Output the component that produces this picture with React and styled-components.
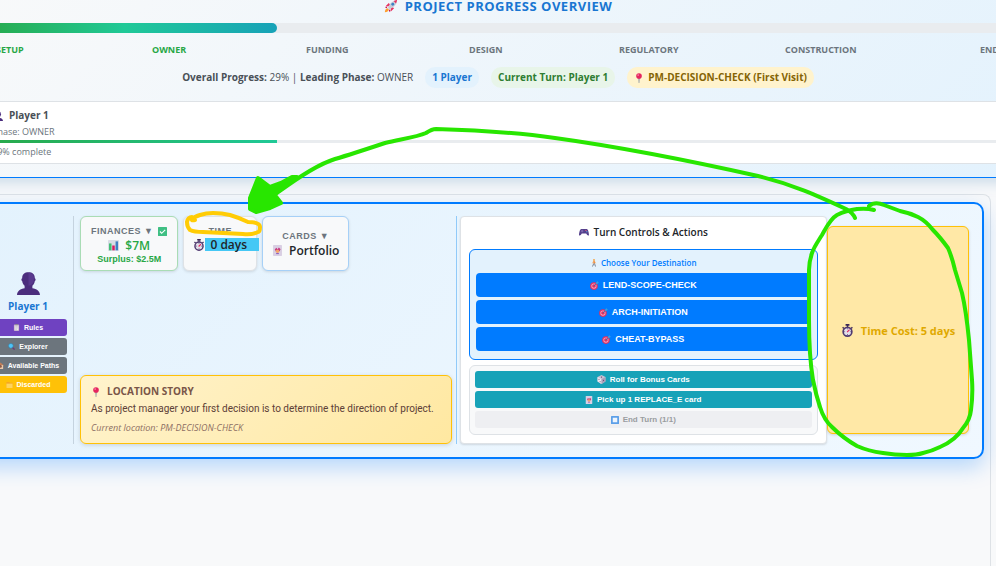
import React from "react";
import styled, { createGlobalStyle } from "styled-components";

const ui = '"Open Sans", "Noto Sans", sans-serif';
const control = '"Liberation Sans", Arial, sans-serif';
const prose = 'Roboto, "Open Sans", sans-serif';

const GlobalStyle = createGlobalStyle`
  *, *::before, *::after { box-sizing: border-box; }
  body { margin: 0; background: #f8f9fa; font-family: ${ui}; color: #212529; }
  h1, h2, h3, p { margin: 0; font-size: inherit; }
  button { margin: 0; cursor: pointer; }
`;

const Page = styled.div`
  position: relative;
  display: flex;
  flex-direction: column;
  min-height: 100vh;
  overflow: hidden;
  background: #f8f9fa;
`;

const Glyph = styled.svg`
  width: ${(p) => p.$size}px;
  height: ${(p) => p.$size}px;
  flex: none;
  display: block;
`;

const art = {
  rocket: (
    <>
      <path d="M3.500 8.500 1 10l2.500.5zM7.500 12.500 6 15l-.5-3z" fill="#c2185b" />
      <path d="M1.500 8.500 5.500 4.500 8 8zM7.500 14.500 11.500 10.500 8 8z" fill="#e8305f" />
      <path d="M4.500 10.500C5.500 6 9.500 2 15 1c-.5 5.500-4.500 9.500-9 10.500z" fill="#c9ccd6" />
      <path d="M11 2.200 15 1l-1.200 4z" fill="#e8305f" />
      <circle cx="10" cy="6" r="1.600" fill="#3b82c4" />
      <path d="M1 15c0-2.500 1-4 3-4.500L5.500 12C5 14 3.500 15 1 15z" fill="#ff9d2e" />
    </>
  ),
  pin: (
    <>
      <path d="M7.300 8h1.500L8 16z" fill="#8a93a0" stroke="#8a93a0" strokeWidth=".6" />
      <circle cx="8" cy="4.700" r="4.500" fill="#e5255f" />
      <circle cx="6.600" cy="3.300" r="1.300" fill="#ff8fac" />
    </>
  ),
  person: (
    <>
      <path d="M0 16c.2-3 2.400-4.200 5.300-4.700V9.500C4.300 8.700 3.700 7.500 3.600 6.300 2.800 6 2.900 4.500 3.600 4.300 3.600 1.500 5.400.2 8 .2s4.400 1.300 4.400 4.100c.7.2.8 1.700 0 2-.1 1.200-.7 2.400-1.700 3.200v1.800c2.900.5 5.100 1.700 5.300 4.700z" fill="#4b2d7d" />
      <path d="M8 .5c2.500 0 3.800 1.500 3.800 4 0 3-1.700 5-3.800 5z" fill="#62419a" opacity=".6" />
    </>
  ),
  chart: (
    <>
      <rect x="0" y="0" width="16" height="16" rx="1" fill="#d8dde5" />
      <rect x="1.500" y="5" width="3.600" height="10" fill="#3fbf73" />
      <rect x="6.200" y="8" width="3.600" height="7" fill="#d81b60" />
      <rect x="11" y="2" width="3.600" height="13" fill="#3d7fc4" />
    </>
  ),
  check: (
    <>
      <rect width="16" height="16" rx="1" fill="#3fbf83" />
      <path d="m3.500 8 3 3.200L12.800 5" fill="none" stroke="#fff" strokeWidth="2" />
    </>
  ),
  watch: (
    <>
      <rect x="5.500" y="0" width="5" height="2" rx=".5" fill="#3a2757" />
      <path d="M8 1v3M2 4l1.500 1.500M14 4l-1.500 1.500" stroke="#3a2757" strokeWidth="1.600" />
      <circle cx="8" cy="9.500" r="5.400" fill="#e4e0ea" stroke="#503a70" strokeWidth="2" />
      <path d="M8 5.500v1M8 12.500v1M4 9.500h1M11 9.500h1" stroke="#503a70" />
      <path d="m7.500 10 3-3" stroke="#e5255f" strokeWidth="1.500" />
    </>
  ),
  card: (
    <>
      <rect x="1.500" y="0" width="13" height="16" rx="1" fill="#d9cfe3" />
      <path d="M4 6 6.500 4 8 6l2-2.500L12.500 6 11 9H5.500z" fill="#c63a82" />
      <circle cx="8" cy="9" r="2.500" fill="#f3a36b" />
      <path d="M6 12.500h4" stroke="#8a5bbd" strokeWidth="1.500" />
    </>
  ),
  pad: (
    <>
      <path d="M3.500 3h9C14.500 3 16 9 16 13c-1.500 1.500-3 0-4.500-2.500h-7C3 13 1.500 14.500 0 13 0 9 1.500 3 3.500 3z" fill="#54408c" />
      <path d="M3 6.500h4M5 4.500v4" stroke="#9a87c9" />
      <circle cx="11" cy="5.500" r="1" fill="#e5557f" />
      <circle cx="12.500" cy="7.500" r="1" fill="#5ba6e0" />
    </>
  ),
  walker: (
    <>
      <circle cx="8" cy="2" r="2" fill="#f3a64a" />
      <path d="M6.500 4h3l1 5h-4z" fill="#f08a3c" />
      <path d="m7.500 9-2.500 6M9 9l2 6" stroke="#6d7788" strokeWidth="1.800" />
      <path d="m6.500 5-2 4M9.500 5l2 3.500" stroke="#f2b067" strokeWidth="1.300" />
    </>
  ),
  target: (
    <>
      <circle cx="7" cy="9" r="6.800" fill="#e02f62" />
      <circle cx="7" cy="9" r="4.600" fill="#f3a9c2" />
      <circle cx="7" cy="9" r="3.200" fill="#e02f62" />
      <path d="m7 9 6-6" stroke="#2675b9" strokeWidth="1.500" />
      <path d="M10.500 5.500 11 2.500 13.500 0l.5 2 2 .5-2.500 2.500z" fill="#38a3df" />
    </>
  ),
  die: (
    <>
      <path d="m8 0 7 3.500v8L8 16l-7-4.500v-8z" fill="#c9c3d3" />
      <path d="m1 3.500 7 4V16l-7-4.500z" fill="#eee9f2" />
      <path d="m15 3.500-7 4V16l7-4.500z" fill="#a99fba" />
      <g fill="#6b3c65">
        <circle cx="8" cy="3.700" r="1.200" />
        <circle cx="3.500" cy="7.500" r="1" />
        <circle cx="5.500" cy="12" r="1" />
        <circle cx="11.500" cy="9.500" r="1" />
      </g>
    </>
  ),
  square: (
    <>
      <rect width="16" height="16" rx="1" fill="#5c9fe8" />
      <rect x="3.500" y="3.500" width="9" height="9" fill="#eef5fd" />
    </>
  ),
  clip: (
    <>
      <rect x="2" y="1" width="12" height="15" rx="1" fill="#b79bc4" />
      <rect x="3.500" y="3" width="9" height="11.500" fill="#eee9ee" />
      <rect x="5" y="0" width="6" height="3" fill="#8c8895" />
      <path d="M5 6h6M5 9h6M5 12h4" stroke="#a4a0aa" />
    </>
  ),
  lens: (
    <>
      <path d="m9 9 6 6" stroke="#6f3a75" strokeWidth="3" />
      <circle cx="6.500" cy="6.500" r="5.500" fill="#4fc3f7" stroke="#357fa5" strokeWidth="1.300" />
    </>
  ),
  house: (
    <>
      <path d="M0 8 8 1l8 7z" fill="#c27d55" />
      <rect x="2" y="7" width="12" height="9" fill="#e8c9aa" />
      <circle cx="8" cy="10" r="3" fill="#8b5a4a" />
    </>
  ),
  folder: (
    <>
      <path d="M1 2h6l2 2h6v12H1z" fill="#f5a623" />
      <path d="M1 6h14v10H1z" fill="#ffd45c" />
    </>
  ),
};

const Icon = ({ name, size = 10 }) => (
  <Glyph $size={size} viewBox="0 0 16 16" aria-hidden="true">
    {art[name]}
  </Glyph>
);

/* ---------- overview header ---------- */

const Overview = styled.header`
  margin: 0 -28px;
  background: linear-gradient(135deg, #f8f9fa 0%, #e3f2fd 100%);
  border-bottom: 1px solid #007bff;
  box-shadow: 0 4px 14px rgba(0, 90, 160, 0.2);
`;

const Title = styled.h1`
  display: flex;
  justify-content: center;
  align-items: center;
  gap: 7px;
  height: 23px;
  padding-bottom: 11px;
  font-size: 13px;
  line-height: 12px;
  letter-spacing: 0.5px;
  color: #1976d2;
`;

const Track = styled.div`
  height: ${(p) => p.$height}px;
  background: #e9ecef;
  border-radius: ${(p) => p.$radius}px;
  overflow: hidden;
`;

const Fill = styled.div`
  height: 100%;
  border-radius: inherit;
  background: ${(p) => p.$paint};
`;

const Stages = styled.div`
  display: grid;
  grid-template-columns: 156fr 154fr 163fr 150fr 166fr 195fr 44fr;
  padding-left: 24px;
  margin-top: 10px;
  font-size: 9px;
  line-height: 13px;
  font-weight: 700;
`;

const Stage = styled.span`
  color: ${(p) => (p.$done ? "#28a745" : "#6c757d")};
`;

const Status = styled.div`
  display: flex;
  justify-content: center;
  align-items: center;
  gap: 12px;
  margin: 11px 0 13px;
  font-size: 10px;
  line-height: 15px;
  color: #495057;
`;

const tones = {
  blue: ["#e3f2fd", "#1976d2"],
  green: ["#e8f5e9", "#2e7d32"],
  amber: ["#fff3cd", "#856404"],
};

const Pill = styled.span`
  display: flex;
  align-items: center;
  gap: 4px;
  padding: 3px 7px;
  border-radius: 10px;
  font-weight: 700;
  background: ${(p) => tones[p.$tone][0]};
  color: ${(p) => tones[p.$tone][1]};
`;

const PlayerStrip = styled.section`
  padding: 7px 0 5px 20px;
  margin-bottom: 13px;
  background: #fff;
  border-top: 1px solid #dee2e6;
  border-bottom: 1px solid #dee2e6;
  font-size: 9px;
  line-height: 13px;
  color: #6c757d;
`;

const StripName = styled.h2`
  display: flex;
  align-items: center;
  gap: 6px;
  margin-bottom: 3px;
  padding-left: 1px;
  font-size: 10px;
  line-height: 13px;
  color: #495057;
`;

const StripTrack = styled(Track)`
  margin: 2px 0 2px -20px;
`;

const StripText = styled.p``;

/* ---------- board ---------- */

const Board = styled.main`
  flex: 1;
  margin: 16px 5px 0 -33px;
  padding: 7px 6px 0;
  border: 1px solid #dee2e6;
  border-bottom: 0;
  border-radius: 8px 8px 0 0;
`;

const Panel = styled.section`
  display: grid;
  grid-template-columns: 84px minmax(0, 386fr) minmax(0, 367fr) 142px;
  padding: 12px 13px 13px;
  border: 2px solid #007bff;
  border-radius: 10px;
  background: linear-gradient(135deg, #e3f2fd 0%, #f0f8ff 100%);
  box-shadow: 0 8px 22px rgba(0, 123, 255, 0.28);
`;

const PlayerColumn = styled.aside`
  display: flex;
  flex-direction: column;
  justify-content: center;
  gap: 2px;
  padding: 50px 6px 46px 0;
`;

const Avatar = styled.div`
  display: flex;
  justify-content: center;
  margin-bottom: 2px;
`;

const PlayerName = styled.h2`
  text-align: center;
  margin-bottom: 3px;
  font-size: 10px;
  line-height: 15px;
  color: #1976d2;
`;

const Button = styled.button`
  display: flex;
  align-items: center;
  justify-content: center;
  gap: 4px;
  width: 100%;
  padding: 0;
  border: 0;
  border-radius: 3px;
  color: #fff;
  font-family: ${control};
  font-weight: 700;
  white-space: nowrap;
`;

const SideButton = styled(Button)`
  height: 17px;
  font-size: 7px;
  background: ${(p) => p.$bg};
`;

const Center = styled.div`
  display: flex;
  flex-direction: column;
  justify-content: space-between;
  margin-right: 3px;
  padding: 0 4px 0 6px;
  border-left: 1px solid #c5d3df;
  border-right: 1px solid #90caf9;
`;

const Cards = styled.div`
  display: flex;
  gap: 5px;
`;

const cardBox = `
  display: flex;
  flex-direction: column;
  align-items: center;
  height: 55px;
  border-radius: 6px;
  background: #f8f9fa;
  box-shadow: 0 1px 3px rgba(0, 0, 0, 0.12);
  font-family: ${ui};
  color: #212529;
  white-space: nowrap;
`;

const CardButton = styled.button`
  ${cardBox}
  justify-content: ${(p) => (p.$middle ? "center" : "flex-start")};
  padding: ${(p) => (p.$middle ? "0 9px" : "8px 10px 0")};
  border: 1px solid ${(p) => p.$edge};
`;

const CardPlain = styled.div`
  ${cardBox}
  padding: 8px 9px 0;
  border: 1px solid #dee2e6;
`;

const CardLabel = styled.span`
  display: flex;
  align-items: center;
  gap: 5px;
  font-family: ${control};
  font-size: 9px;
  line-height: 13px;
  font-weight: 700;
  letter-spacing: 0.5px;
  color: #6c757d;
`;

const CardValue = styled.span`
  display: flex;
  align-items: center;
  gap: ${(p) => p.$gap}px;
  font-size: 12px;
  line-height: 15px;
  font-weight: 600;
  color: ${(p) => p.$color};
`;

const CardNote = styled.span`
  font-family: ${control};
  font-size: 9px;
  line-height: 13px;
  font-weight: 700;
  color: #28a745;
`;

const Highlight = styled.span`
  margin-right: -12px;
  padding: 0 12px 0 5px;
  line-height: 13px;
  background: #45c8f5;
`;

const Story = styled.article`
  padding: 8px 10px;
  border: 1px solid #ffc107;
  border-radius: 6px;
  background: linear-gradient(135deg, #fff3cd 0%, #ffe8a1 100%);
  box-shadow: 0 1px 4px rgba(0, 0, 0, 0.15);
  color: #5d4037;
  font-size: 10px;
  white-space: nowrap;
`;

const StoryTitle = styled.h3`
  display: flex;
  align-items: center;
  gap: 6px;
  font-size: 10px;
  line-height: 15px;
  color: #795548;
`;

const StoryText = styled.p`
  margin: 2px 0 4px;
  font-family: ${prose};
  line-height: 16px;
`;

const StoryPlace = styled.p`
  font-size: 9px;
  line-height: 14px;
  font-style: italic;
  color: #8d6e63;
`;

const Controls = styled.section`
  padding: 8px;
  border: 1px solid #dee2e6;
  border-radius: 4px;
  background: #fff;
  box-shadow: 0 1px 2px rgba(0, 0, 0, 0.12);
`;

const ControlsTitle = styled.h2`
  display: flex;
  align-items: center;
  justify-content: center;
  gap: 5px;
  margin-bottom: 10px;
  font-size: 10px;
  line-height: 14px;
  font-weight: 600;
  color: #212529;
`;

const Group = styled.div`
  display: flex;
  flex-direction: column;
  gap: 3px;
  padding: ${(p) => (p.$main ? "6px 6px 8px" : "5px 5px 6px")};
  margin-bottom: ${(p) => (p.$main ? 5 : 0)}px;
  border: 1px solid ${(p) => (p.$main ? "#007bff" : "#dee2e6")};
  border-radius: 6px;
  background: ${(p) => (p.$main ? "#e3f2fd" : "#f8f9fa")};
`;

const GroupTitle = styled.h3`
  display: flex;
  align-items: center;
  justify-content: center;
  gap: 3px;
  margin-bottom: 1px;
  font-size: 8px;
  line-height: 13px;
  font-weight: 600;
  color: #007bff;
`;

const MoveButton = styled(Button)`
  height: 24px;
  border-radius: 4px;
  font-size: 9px;
  background: #007bff;
`;

const ActionButton = styled(Button)`
  height: 17px;
  font-size: 8px;
  background: #17a2b8;

  &:disabled {
    background: #eeeff2;
    color: #9a9da1;
  }
`;

const TimeCost = styled.div`
  display: flex;
  align-items: center;
  justify-content: center;
  gap: 7px;
  margin: 10px 0;
  border: 1px solid #ffc107;
  border-radius: 6px;
  background: #ffe8a6;
  box-shadow: 0 1px 3px rgba(0, 0, 0, 0.15);
  color: #e0a800;
  font-size: 11px;
  font-weight: 700;
  white-space: nowrap;
`;

const Ink = styled.svg`
  position: absolute;
  top: 0;
  left: 0;
  width: 996px;
  height: 566px;
  pointer-events: none;
  fill: none;
  stroke: #28e600;
  stroke-width: 4;
  stroke-linecap: round;
  stroke-linejoin: round;
`;

const stages = ["SETUP", "OWNER", "FUNDING", "DESIGN", "REGULATORY", "CONSTRUCTION", "END"];
const destinations = ["LEND-SCOPE-CHECK", "ARCH-INITIATION", "CHEAT-BYPASS"];
const tools = [
  ["Rules", "clip", "#6f42c1"],
  ["Explorer", "lens", "#6c757d"],
  ["Available Paths", "house", "#6c757d"],
  ["Discarded", "folder", "#ffc107"],
];
const progress = 29;

export default function App() {
  return (
    <Page>
      <GlobalStyle />
      <Overview>
        <Title>
          <Icon name="rocket" size={14} />
          PROJECT PROGRESS OVERVIEW
        </Title>
        <Track $height={10} $radius={5}>
          <Fill
            $paint="linear-gradient(90deg, #28a745 0%, #20c997 50%, #17a2b8 100%)"
            style={{ width: `${progress}%` }}
          />
        </Track>
        <Stages>
          {stages.map((s, i) => (
            <Stage key={s} $done={i < 2}>{s}</Stage>
          ))}
        </Stages>
        <Status>
          <span>
            <b>Overall Progress:</b> {progress}% | <b>Leading Phase:</b> OWNER
          </span>
          <Pill $tone="blue">1 Player</Pill>
          <Pill $tone="green">Current Turn: Player 1</Pill>
          <Pill $tone="amber">
            <Icon name="pin" />
            PM-DECISION-CHECK (First Visit)
          </Pill>
        </Status>
        <PlayerStrip>
          <StripName>
            <Icon name="person" />
            Player 1
          </StripName>
          <StripText>Phase: OWNER</StripText>
          <StripTrack $height={3} $radius={0}>
            <Fill
              $paint="linear-gradient(90deg, #28a745, #20c997)"
              style={{ width: `${progress}%` }}
            />
          </StripTrack>
          <StripText>{progress}% complete</StripText>
        </PlayerStrip>
      </Overview>

      <Board>
        <Panel>
          <PlayerColumn>
            <Avatar><Icon name="person" size={23} /></Avatar>
            <PlayerName>Player 1</PlayerName>
            {tools.map(([label, icon, bg]) => (
              <SideButton key={label} $bg={bg}>
                <Icon name={icon} size={7} />
                {label}
              </SideButton>
            ))}
          </PlayerColumn>

          <Center>
            <Cards>
              <CardButton $edge="#a9dcb5">
                <CardLabel>FINANCES ▼ <Icon name="check" size={9} /></CardLabel>
                <CardValue $gap={6} $color="#28a745"><Icon name="chart" size={11} />$7M</CardValue>
                <CardNote>Surplus: $2.5M</CardNote>
              </CardButton>
              <CardPlain>
                <CardLabel>TIME</CardLabel>
                <CardValue $gap={0} $color="#212529">
                  <Icon name="watch" size={12} />
                  <Highlight>0 days</Highlight>
                </CardValue>
              </CardPlain>
              <CardButton $edge="#a6d0f7" $middle>
                <CardLabel>CARDS ▼</CardLabel>
                <CardValue $gap={6} $color="#212529"><Icon name="card" size={11} />Portfolio</CardValue>
              </CardButton>
            </Cards>
            <Story>
              <StoryTitle><Icon name="pin" />LOCATION STORY</StoryTitle>
              <StoryText>As project manager your first decision is to determine the direction of project.</StoryText>
              <StoryPlace>Current location: PM-DECISION-CHECK</StoryPlace>
            </Story>
          </Center>

          <Controls>
            <ControlsTitle><Icon name="pad" />Turn Controls &amp; Actions</ControlsTitle>
            <Group $main>
              <GroupTitle><Icon name="walker" size={8} />Choose Your Destination</GroupTitle>
              {destinations.map((d) => (
                <MoveButton key={d}><Icon name="target" size={9} />{d}</MoveButton>
              ))}
            </Group>
            <Group>
              <ActionButton><Icon name="die" size={9} />Roll for Bonus Cards</ActionButton>
              <ActionButton><Icon name="card" size={8} />Pick up 1 REPLACE_E card</ActionButton>
              <ActionButton disabled><Icon name="square" size={8} />End Turn (1/1)</ActionButton>
            </Group>
          </Controls>

          <TimeCost><Icon name="watch" size={13} />Time Cost: 5 days</TimeCost>
        </Panel>
      </Board>

      <Ink viewBox="0 0 996 566" aria-hidden="true">
        <path d="M277 193C300 176 322 163 335 159C352 154 370 148 385 143C402 139 417 137 426 133Q432 129 436 129Q505 131 555 138C620 147 700 163 758 176C792 184 818 196 846 209Q853 213 855 218" />
        <path d="M874 210Q867 208 857 209C850 210 843 212 837 215C830 219 826 228 822 235C817 243 814 247 812 253Q809 262 809 270L809 320C809 342 810 362 813 380Q816 395 820 407Q824 420 832 427Q843 438 857 446Q868 451 883 453Q895 455 907 455Q917 455 923 453Q932 451 940 447Q956 440 963 428Q970 420 971 410Q973 395 972 380L969 340Q966 310 962 293L955 270Q952 257 948 248Q940 237 933 230Q926 221 918 217Q910 213 900 211L884 205Q875 201 869 206" />
        <path d="M258 178 254 188 250 198 250 209 256 212 270 208 281 203 274 194 284 187 297 177 292 177 281 183 270 187Z" fill="#28e600" />
        <path d="M195 220Q191 221 192 219Q194 217 200 215Q206 213 213 213Q222 213 230 215Q240 218 248 222Q260 222 260 227Q260 232 258 232Q252 235 243 234L203 232Q194 232 190 230Q187 227 187 222Q188 217 192 217" stroke="#ffcc05" />
      </Ink>
    </Page>
  );
}
